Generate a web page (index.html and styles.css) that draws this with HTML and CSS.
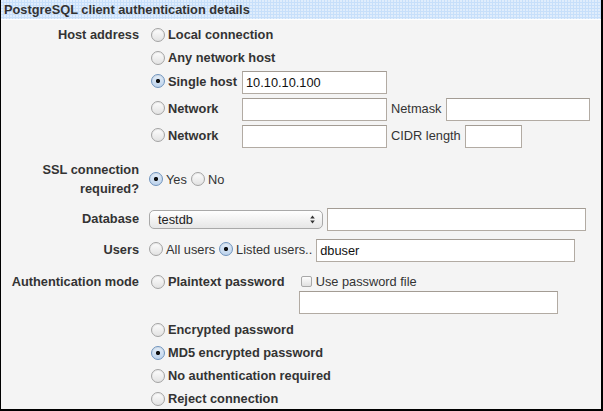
FILE: index.html
```html
<!DOCTYPE html>
<html>
<head>
<meta charset="utf-8">
<link rel="stylesheet" href="styles.css">
</head>
<body>
<div class="frame">
  <div class="head">PostgreSQL client authentication details</div>
  <div class="form">
    <div class="row">
      <div class="lbl">Host address</div>
      <div class="hostgrid">
        <label class="opt b wide"><input type="radio" name="host">Local connection</label>
        <label class="opt b wide"><input type="radio" name="host">Any network host</label>
        <label class="opt b up"><input type="radio" name="host" checked>Single host</label>
        <div class="fields"><input class="txt w145" value="10.10.10.100"></div>
        <label class="opt b up"><input type="radio" name="host">Network</label>
        <div class="fields"><input class="txt w145"><span class="up">Netmask</span><input class="txt w144"></div>
        <label class="opt b up"><input type="radio" name="host">Network</label>
        <div class="fields"><input class="txt w145"><span class="up">CIDR length</span><input class="txt w57"></div>
      </div>
    </div>

    <div class="row ssl">
      <div class="lbl">SSL connection required?</div>
      <div class="inline">
        <label class="opt"><input type="radio" name="ssl" checked>Yes</label>
        <label class="opt"><input type="radio" name="ssl">No</label>
      </div>
    </div>

    <div class="row db">
      <div class="lbl up">Database</div>
      <div class="inline">
        <div class="select"><span>testdb</span>
          <svg width="5" height="9" viewBox="0 0 5 9"><path d="M2.5 0.5 L4.8 3.4 L0.2 3.4 Z M2.5 8.5 L4.8 5.6 L0.2 5.6 Z" fill="#333"/></svg>
        </div>
        <input class="txt w259">
      </div>
    </div>

    <div class="row users">
      <div class="lbl up">Users</div>
      <div class="inline">
        <label class="opt up"><input type="radio" name="users">All users</label>
        <label class="opt up"><input type="radio" name="users" checked>Listed users..</label>
        <input class="txt w259" value="dbuser">
      </div>
    </div>

    <div class="row auth">
      <div class="lbl">Authentication mode</div>
      <div class="authlist">
        <div class="first">
          <label class="opt b"><input type="radio" name="auth">Plaintext password</label>
          <div class="pwfile">
            <label class="chk"><input type="checkbox">Use password file</label>
            <input class="txt w259">
          </div>
        </div>
        <label class="opt b gapped"><input type="radio" name="auth">Encrypted password</label>
        <label class="opt b"><input type="radio" name="auth" checked>MD5 encrypted password</label>
        <label class="opt b"><input type="radio" name="auth">No authentication required</label>
        <label class="opt b"><input type="radio" name="auth">Reject connection</label>
      </div>
    </div>
  </div>
</div>
</body>
</html>
```

FILE: styles.css
```css
html, body {
  margin: 0;
  padding: 0;
}
body {
  font-family: "Liberation Sans", Arial, sans-serif;
  font-size: 12.8px;
  color: #333;
  background: #f4f4f4;
}
.frame {
  width: 603px;
  height: 411px;
  box-sizing: border-box;
  border-left: 1px solid #000;
  border-right: 2px solid #000;
  border-bottom: 2px solid #000;
  background: #f4f4f4;
  overflow: hidden;
}
.head {
  height: 19px;
  line-height: 19px;
  padding-left: 3px;
  font-weight: bold;
  color: #333;
  background-color: #c7dffa;
  background-image: radial-gradient(circle at 1px 1px, rgba(255,255,255,0.8) 0.55px, rgba(255,255,255,0) 0.9px);
  background-size: 3px 3px;
  border-bottom: 1px solid #fff;
}
.form {
  padding-top: 5px;
}
.row {
  display: grid;
  grid-template-columns: 138px 1fr;
  column-gap: 10px;
  align-items: start;
}
.lbl {
  font-weight: bold;
  text-align: right;
  line-height: 19px;
}
.up {
  margin-bottom: 3px;
}
.hostgrid {
  display: grid;
  grid-template-columns: 93px auto;
  row-gap: 4px;
  align-items: center;
}
.hostgrid .opt {
  padding-left: 2px;
}
.wide {
  grid-column: 1 / 3;
}
.opt {
  display: flex;
  align-items: center;
  line-height: 19px;
  white-space: nowrap;
}
.b {
  font-weight: bold;
}
.fields {
  display: flex;
  align-items: center;
  gap: 4px;
}
input[type="radio"] {
  -webkit-appearance: none;
  appearance: none;
  box-sizing: border-box;
  width: 14px;
  height: 14px;
  margin: 0 3px 0 0;
  border: 1px solid #a3a3a3;
  border-radius: 50%;
  background: linear-gradient(#fdfdfd, #e2e2e2);
  box-shadow: inset 0 1px 1px rgba(0,0,0,0.08);
  flex: none;
}
input[type="radio"]:checked {
  border-color: #6f93bd;
  background: radial-gradient(circle, #111 0, #111 1.8px, rgba(0,0,0,0) 2.4px), linear-gradient(#e3edf8, #bdd3ec);
}
input[type="checkbox"] {
  -webkit-appearance: none;
  appearance: none;
  box-sizing: border-box;
  width: 11px;
  height: 11px;
  margin: 0 4px 0 2px;
  border: 1px solid #a8a8a8;
  border-radius: 2px;
  background: linear-gradient(#fdfdfd, #e0e0e0);
  flex: none;
}
.txt {
  box-sizing: border-box;
  height: 23px;
  margin: 0;
  padding: 0 3px;
  border: 1px solid #b2aba3;
  border-top-color: #a39c94;
  background: #fff;
  font-family: "Liberation Sans", Arial, sans-serif;
  font-size: 12.8px;
  color: #111;
  outline: none;
}
.w145 { width: 145px; }
.w144 { width: 144px; }
.w57 { width: 57px; }
.w259 { width: 259px; }

.ssl {
  margin-top: 12px;
  align-items: center;
}
.inline {
  display: flex;
  align-items: center;
  gap: 4px;
}
.db {
  margin-top: 10px;
  align-items: center;
}
.select {
  box-sizing: border-box;
  width: 174px;
  height: 19px;
  padding: 0 7px 0 8px;
  border: 1px solid #a9a9a9;
  border-radius: 5px;
  background: linear-gradient(#ffffff, #e6e6e6);
  display: flex;
  align-items: center;
  justify-content: space-between;
  color: #222;
  margin-bottom: 1px;
}
.users {
  margin-top: 8px;
  align-items: center;
}
.auth {
  margin-top: 10px;
}
.authlist {
  display: flex;
  flex-direction: column;
  gap: 4px;
  padding-left: 2px;
}
.first {
  display: flex;
  align-items: flex-start;
}
.pwfile {
  margin-left: 14px;
  display: flex;
  flex-direction: column;
}
.chk {
  display: flex;
  align-items: center;
  line-height: 19px;
}
.gapped {
  margin-top: 2px;
}
```
